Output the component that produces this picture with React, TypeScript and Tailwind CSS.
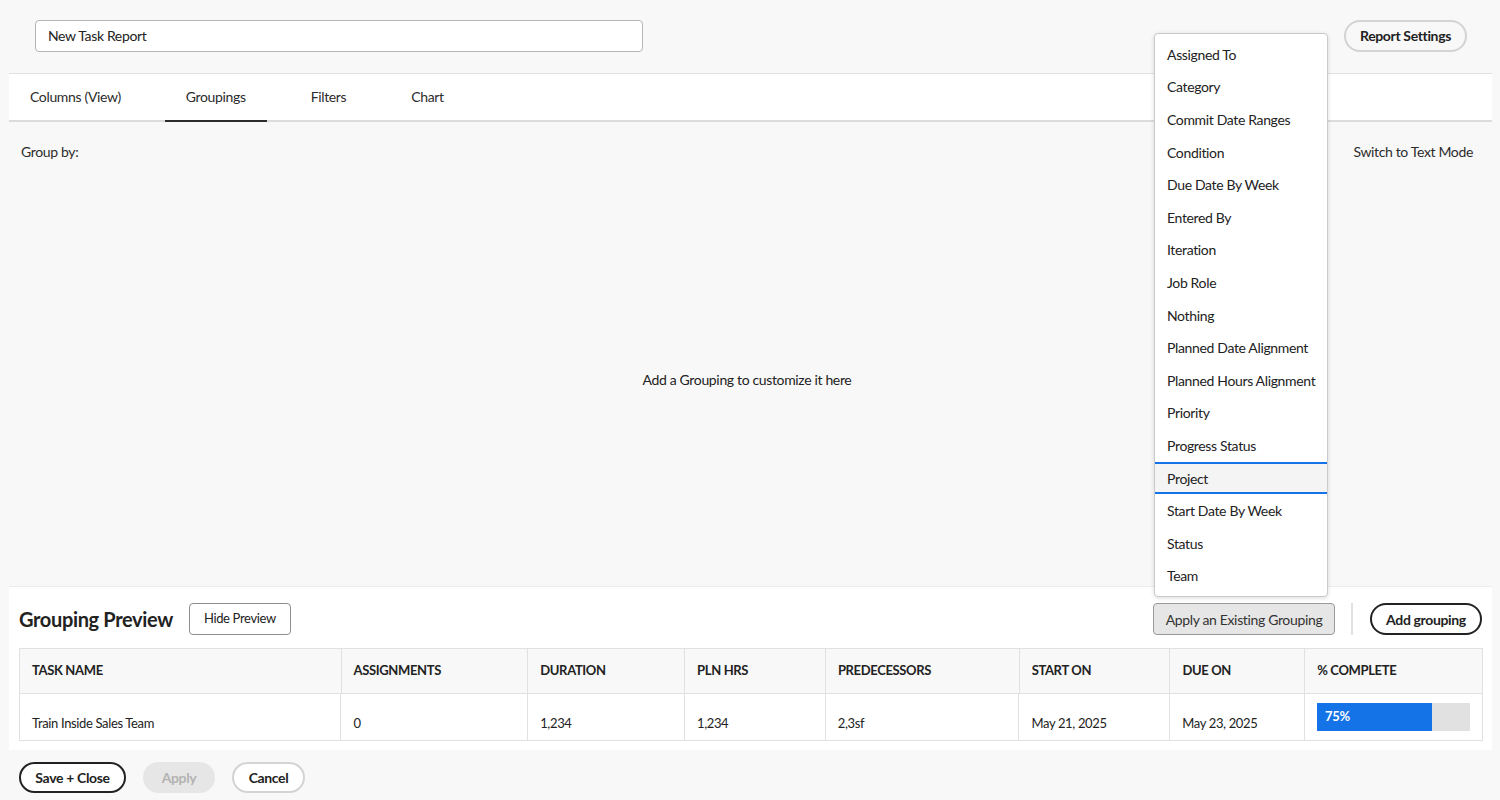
import React from "react";

const items = [
  "Assigned To",
  "Category",
  "Commit Date Ranges",
  "Condition",
  "Due Date By Week",
  "Entered By",
  "Iteration",
  "Job Role",
  "Nothing",
  "Planned Date Alignment",
  "Planned Hours Alignment",
  "Priority",
  "Progress Status",
  "Project",
  "Start Date By Week",
  "Status",
  "Team",
];

const cols = [
  { name: "TASK NAME", w: 321, v: "Train Inside Sales Team" },
  { name: "ASSIGNMENTS", w: 187, v: "0" },
  { name: "DURATION", w: 157, v: "1,234" },
  { name: "PLN HRS", w: 141, v: "1,234" },
  { name: "PREDECESSORS", w: 194, v: "2,3sf" },
  { name: "START ON", w: 151, v: "May 21, 2025" },
  { name: "DUE ON", w: 135, v: "May 23, 2025" },
  { name: "% COMPLETE", w: 178, v: "" },
];

export default function App() {
  return (
    <div
      className="relative w-full h-[800px] bg-[#f8f8f8] overflow-hidden text-[#222222] text-[14px] tracking-[-0.35px]"
      style={{ fontFamily: "Lato, 'Noto Sans', sans-serif" }}
    >
      {/* header */}
      <div className="h-[73px] flex items-start pt-[20px] pl-[35px] pr-[33px]">
        <div className="w-[608px] h-[32px] bg-white border border-[#b5b5b5] rounded-[4px] flex items-center px-[12px] pb-[1px] text-[14px]">
          New Task Report
        </div>
        <div className="flex-1" />
        <button className="h-[32px] w-[123px] rounded-full border-2 border-[#d3d3d3] bg-[#f8f8f8] font-bold text-[14px] text-[#222] pb-[1px]">
          Report Settings
        </button>
      </div>

      <div className="ml-[9px] mr-[8px]">
        {/* tabs */}
        <div className="h-[49px] bg-white border-t border-[#e1e1e1] border-b-2 border-b-[#dcdcdc] flex items-stretch gap-[23px] text-[14px] text-[#2c2c2c]">
          {["Columns (View)", "Groupings", "Filters", "Chart"].map((t) => (
            <div key={t} className="px-[21px] pb-[1px] flex items-center relative">
              {t}
              {t === "Groupings" && (
                <div className="absolute left-0 right-0 bottom-[-2px] h-[2px] bg-[#2c2c2c]" />
              )}
            </div>
          ))}
        </div>

        {/* main */}
        <div className="h-[464px] flex flex-col px-[12px] pt-[19px] pr-[19px]">
          <div className="flex justify-between text-[14px] text-[#2c2c2c]">
            <span>Group by:</span>
            <span>Switch to Text Mode</span>
          </div>
          <div className="flex-1 flex items-center justify-center pt-[10px]">
            <span className="text-[14px]">Add a Grouping to customize it here</span>
          </div>
        </div>

        {/* preview */}
        <div className="bg-white border-t border-[#ececec] h-[164px] px-[10px] pt-[16px]">
          <div className="flex items-center h-[32px]">
            <span className="text-[20px] font-bold mr-[16px]">Grouping Preview</span>
            <button className="h-[32px] w-[102px] border border-[#8e8e8e] rounded-[4px] text-[13px] bg-white">
              Hide Preview
            </button>
            <div className="flex-1" />
            <button className="h-[32px] w-[182px] border border-[#999] rounded-[4px] bg-[#e6e6e6] text-[14px] text-[#333]">
              Apply an Existing Grouping
            </button>
            <div className="w-[2px] h-[32px] bg-[#e1e1e1] ml-[16px] mr-[17px]" />
            <button className="h-[32px] w-[112px] border-2 border-[#222] rounded-full bg-white text-[14px] font-bold">
              Add grouping
            </button>
          </div>
          <div className="mt-[13px] border border-[#e1e1e1] w-[1464px]">
            <div className="flex h-[45px] bg-[#f8f8f8] border-b border-[#e1e1e1]">
              {cols.map((c, i) => (
                <div
                  key={c.name}
                  className={
                    "flex items-center px-[12px] text-[13px] font-bold " +
                    (i > 0 ? "border-l border-[#e1e1e1]" : "")
                  }
                  style={{ width: c.w }}
                >
                  {c.name}
                </div>
              ))}
            </div>
            <div className="flex h-[46px] bg-white">
              {cols.map((c, i) => (
                <div
                  key={c.name}
                  className={
                    "flex px-[12px] text-[13px] " +
                    (i > 0 ? "border-l border-[#e1e1e1] " : "") +
                    (i === 7 ? "items-center" : "items-end pb-[7px]")
                  }
                  style={{ width: c.w }}
                >
                  {i === 7 ? (
                    <div className="w-[153px] h-[28px] bg-[#e1e1e1] flex">
                      <div className="w-[75%] h-full bg-[#1473e6] text-white text-[13px] font-bold flex items-center pl-[8px]">
                        75%
                      </div>
                    </div>
                  ) : (
                    c.v
                  )}
                </div>
              ))}
            </div>
          </div>
        </div>

        {/* footer */}
        <div className="h-[50px] flex items-center gap-[17px] pl-[10px] pt-[4px]">
          <button className="h-[31px] w-[107px] rounded-full border-2 border-[#222] bg-white font-bold text-[14px]">
            Save + Close
          </button>
          <button className="h-[31px] w-[72px] rounded-full bg-[#e6e6e6] text-[#b3b3b3] font-bold text-[14px]">
            Apply
          </button>
          <button className="h-[31px] w-[73px] rounded-full border-2 border-[#d3d3d3] bg-white font-bold text-[14px]">
            Cancel
          </button>
        </div>
      </div>

      {/* dropdown */}
      <div className="absolute left-[1154px] top-[33px] w-[174px] bg-white border border-[#cacaca] rounded-[4px] shadow-[0_1px_4px_rgba(0,0,0,0.15)] py-[4px]">
        {items.map((it) => (
          <div
            key={it}
            className={
              "h-[32.6px] flex items-center px-[12px] text-[14px] whitespace-nowrap " +
              (it === "Project"
                ? "bg-[#f4f4f4] border-y-2 border-[#1473e6]"
                : "")
            }
          >
            {it}
          </div>
        ))}
      </div>
    </div>
  );
}
